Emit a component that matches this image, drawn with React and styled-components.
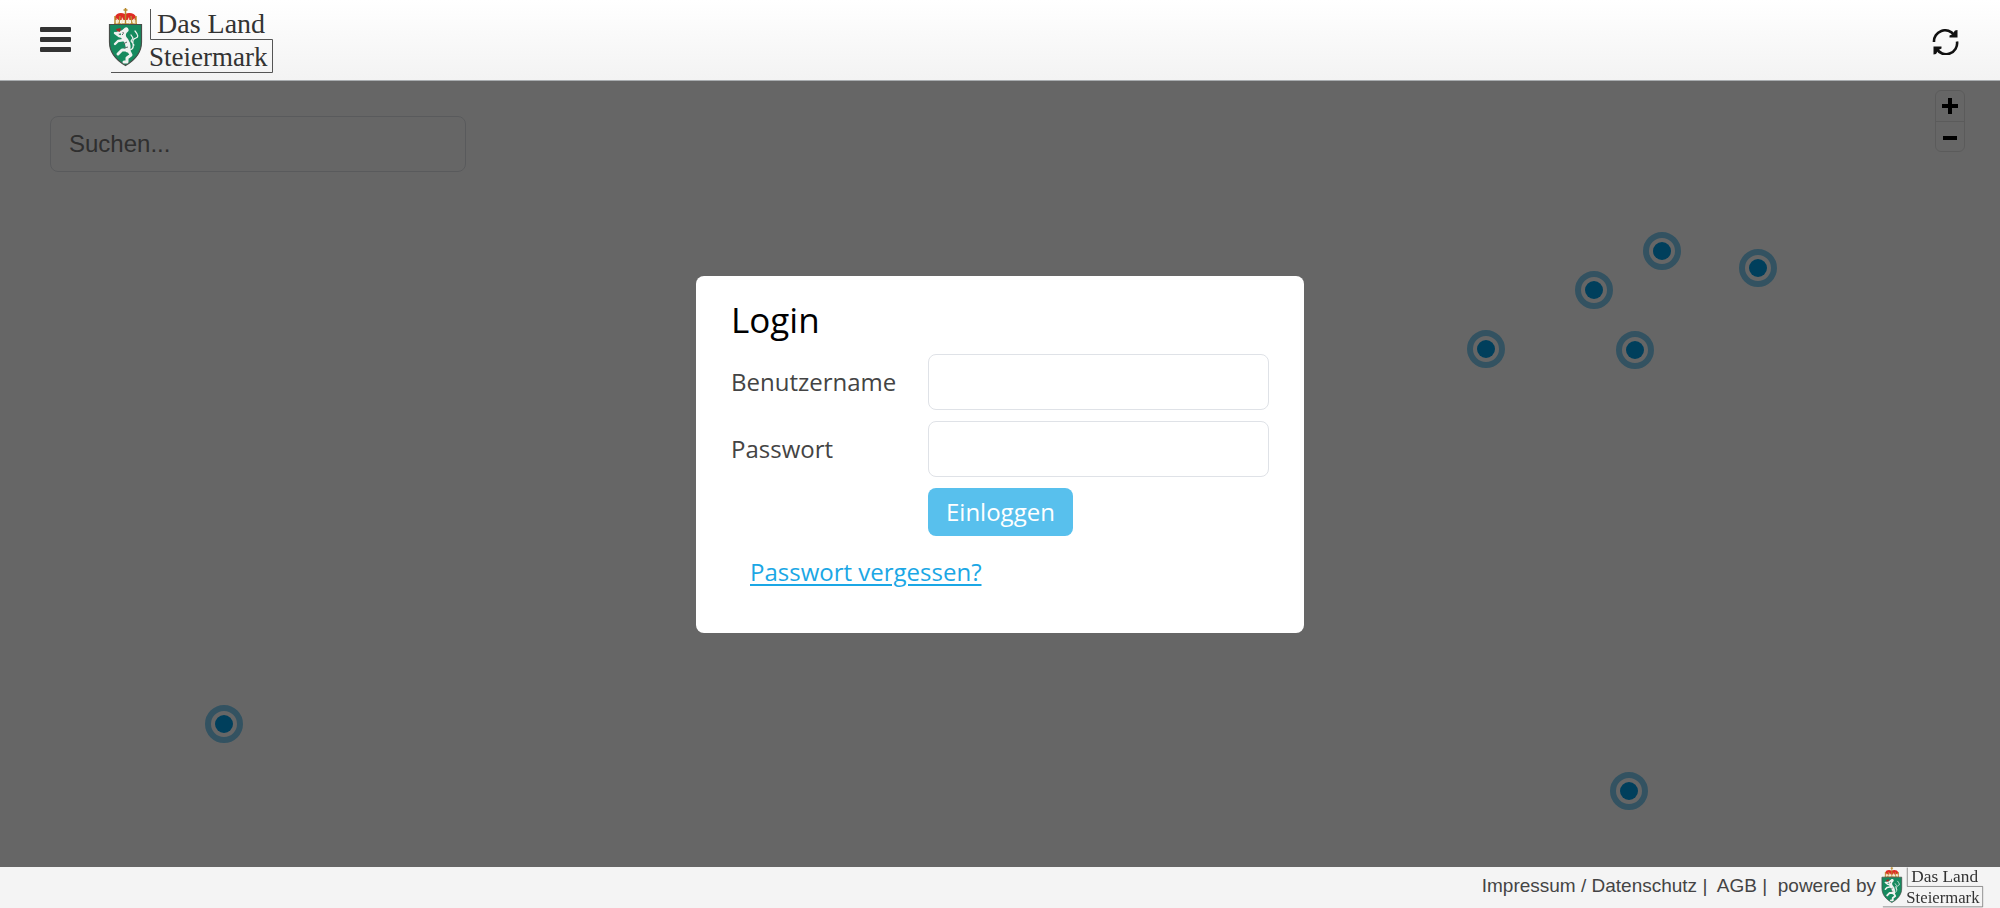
import React from 'react';
import styled, { createGlobalStyle } from 'styled-components';

const SANS = '"Liberation Sans", Arial, sans-serif';
const OPEN = '"Open Sans", sans-serif';

const GlobalStyle = createGlobalStyle`
  *, *::before, *::after { box-sizing: border-box; }
  body { margin: 0; font-family: ${OPEN}; background: #fff; }
`;

const Page = styled.div`
  min-height: 100vh;
  display: flex;
  flex-direction: column;
`;

const Header = styled.header`
  position: relative;
  z-index: 2;
  height: 81px;
  padding: 0 40px;
  display: flex;
  align-items: center;
  gap: 37px;
  background: linear-gradient(#fff, #f3f3f3);
  border-bottom: 1px solid #a9adb0;
`;

const IconButton = styled.button`
  display: flex;
  padding: 0;
  border: 0;
  background: none;
  cursor: pointer;
`;

const MenuButton = styled(IconButton)`
  margin-bottom: 2px;
`;

const RefreshButton = styled(IconButton)`
  margin: 4px 0 0 auto;
`;

const LogoSvg = styled.svg`
  display: block;
  flex: none;
  width: ${(p) => p.$width}px;
  height: auto;
  overflow: visible;
`;

const Map = styled.main`
  position: relative;
  flex: 1;
  background: #fff;
`;

const MapControls = styled.div`
  display: flex;
  justify-content: space-between;
  align-items: flex-start;
  padding: 9px 35px 0 50px;
`;

const TextInput = styled.input`
  height: 56px;
  width: 100%;
  padding: 0 18px;
  border: 1px solid #dfe2e7;
  border-radius: 8px;
  background: #fff;
  color: #444;
  font: 24px ${OPEN};
`;

const SearchInput = styled(TextInput)`
  width: 416px;
  margin-top: 26px;
  font-family: ${SANS};
  &::placeholder { color: #757575; opacity: 1; }
`;

const ZoomBar = styled.div`
  width: 30px;
  border: 1px solid #e4e4e4;
  border-radius: 6px;
`;

const ZoomButton = styled(IconButton)`
  width: 100%;
  height: 30px;
  align-items: center;
  justify-content: center;
  & + & { border-top: 1px solid #e4e4e4; }
`;

const Marker = styled.span`
  position: absolute;
  width: 38px;
  height: 38px;
  margin: -19px 0 0 -19px;
  border: 6px solid rgba(0, 158, 230, 0.5);
  border-radius: 50%;
  display: grid;
  place-items: center;
  &::after {
    content: '';
    width: 18px;
    height: 18px;
    border-radius: 50%;
    background: #009ee6;
  }
`;

const Overlay = styled.div`
  position: fixed;
  inset: 0;
  z-index: 1;
  display: grid;
  place-items: center;
  background: rgba(0, 0, 0, 0.6);
`;

const Dialog = styled.section`
  width: 608px;
  max-width: 100%;
  padding: 20px 35px 44px;
  border-radius: 8px;
  background: #fff;
`;

const Title = styled.h1`
  margin: 0;
  color: #000;
  font-size: 35px;
  font-weight: 400;
  line-height: 48px;
`;

const Form = styled.form`
  display: grid;
  grid-template-columns: 197px 1fr;
  align-items: center;
  row-gap: 11px;
  margin-top: 10px;
`;

const Label = styled.label`
  color: #444;
  font-size: 24px;
`;

const SubmitButton = styled.button`
  grid-column: 2;
  justify-self: start;
  height: 48px;
  padding: 0 18px;
  border: 0;
  border-radius: 8px;
  background: #58c0ed;
  color: #fff;
  font: 24px ${OPEN};
  cursor: pointer;
`;

const ForgotLink = styled.a`
  display: inline-block;
  margin: 19px 0 0 19px;
  color: #1ba7e5;
  font-size: 24px;
  line-height: 34px;
  text-underline-offset: 3px;
`;

const Footer = styled.footer`
  position: relative;
  z-index: 2;
  height: 41px;
  padding-right: 17px;
  display: flex;
  align-items: center;
  justify-content: flex-end;
  background: #f4f4f4;
  color: #444;
  font: 19px/37px ${SANS};
`;

const FooterText = styled.span`
  align-self: flex-start;
  margin-right: 5px;
  white-space: pre;
`;

const FooterLink = styled.a`
  color: inherit;
  text-decoration: none;
`;

const MARKERS = [
  [1486, 349], [1594, 290], [1662, 251], [1758, 268], [1635, 350], [224, 724], [1629, 791],
].map(([x, y]) => ({ left: `${x / 20}%`, top: `${((y - 81) / 786) * 100}%` }));

function Logo({ width }) {
  return (
    <LogoSvg $width={width} viewBox="0 0 165 65" role="img" aria-label="Das Land Steiermark">
      <path d="M7 9C8 5 13 4 17 6C21 4 27 5 28 9L28 12H7z" fill="#df2b24" />
      <g fill="none" stroke="#b98a2d" strokeWidth="1.5">
        <path d="M17.500 0v16M15.500 2h4M7 8v8M28 8v8M12 8l-1 8M23 8l1 8" />
        <path d="M6 16.200h23" strokeWidth="1.800" />
      </g>
      <path d="M8.500 10l3 3-3 3zM14 9l2 4-3 3zM21 9l-2 4 3 3zM26.500 10l-3 3 4 3z" fill="#f4e7c4" />
      <path d="M1.500 16.500H33.500V34C33.500 45 27 52 17.500 57.500C8 52 1.500 45 1.500 34z" fill="#168a5e" stroke="#484d49" strokeWidth="1.200" />
      <g fill="none" stroke="#f0f2f0" strokeLinecap="round" strokeLinejoin="round">
        <path d="M18 22Q14 25 16 30Q21 35 20 42" strokeWidth="5" />
        <path d="M19 21l-6 3-4 1M15 29l-4-1-4-3M16 32l-6 1-3 3" strokeWidth="2.400" />
        <path d="M20 42l-6 0-4 4M21 43l2 4-4 3 0 4-3 0" strokeWidth="3" />
        <path d="M22 42q4-1 3-6t3-6-1-7M26 37l-3-4 2-3-2-3" strokeWidth="1.200" />
      </g>
      <path d="M8 21l5-1-1 4-3-1z" fill="#a72825" />
      <path d="M15 24q1 2-1 3M19 34l-4 2M20 39l-4 1" fill="none" stroke="#5c6862" strokeWidth="1" />
      <path d="M42.500 1V31.500H164.500V64.500H3" fill="none" stroke="#555" strokeWidth="1" />
      <g fill="#333" fontFamily="'Liberation Serif', serif">
        <text x="49" y="25" fontSize="28">Das Land</text>
        <text x="41" y="58" fontSize="27">Steiermark</text>
      </g>
    </LogoSvg>
  );
}

export default function App() {
  return (
    <>
      <GlobalStyle />
      <Page>
        <Header>
          <MenuButton aria-label="Menü">
            <svg width="31" height="25" viewBox="0 0 31 25" fill="#333">
              <rect width="31" height="5" rx="1" />
              <rect y="10" width="31" height="5" rx="1" />
              <rect y="20" width="31" height="5" rx="1" />
            </svg>
          </MenuButton>
          <Logo width={165} />
          <RefreshButton aria-label="Aktualisieren">
            <svg width="28" height="26" viewBox="0 0 28 26">
              <path d="M2 13A11 11 0 0 1 22 6M25 12.500A11 11 0 0 1 4.500 19.500" fill="none" stroke="#111" strokeWidth="2.600" />
              <path d="M25.500 1V8.500H17.500V6.500L20 5.500 23 1.500zM1.500 25.500V17.500H9.500V19.500L6.500 21 4 25z" fill="#111" />
            </svg>
          </RefreshButton>
        </Header>
        <Map>
          <MapControls>
            <SearchInput type="search" placeholder="Suchen..." aria-label="Suchen" />
            <ZoomBar>
              <ZoomButton aria-label="Vergrößern">
                <svg width="16" height="16"><path d="M8 0V16M0 8H16" stroke="#000" strokeWidth="4" /></svg>
              </ZoomButton>
              <ZoomButton aria-label="Verkleinern">
                <svg width="16" height="16"><path d="M1 9H15" stroke="#000" strokeWidth="4" /></svg>
              </ZoomButton>
            </ZoomBar>
          </MapControls>
          {MARKERS.map((pos) => <Marker key={pos.left} style={pos} />)}
        </Map>
        <Footer>
          <FooterText>
            <FooterLink href="#impressum">Impressum / Datenschutz</FooterLink>{' |  '}
            <FooterLink href="#agb">AGB</FooterLink>{' |  powered by'}
          </FooterText>
          <Logo width={102} />
        </Footer>
      </Page>
      <Overlay>
        <Dialog role="dialog" aria-labelledby="login-title">
          <Title id="login-title">Login</Title>
          <Form>
            <Label htmlFor="user">Benutzername</Label>
            <TextInput id="user" type="text" />
            <Label htmlFor="password">Passwort</Label>
            <TextInput id="password" type="password" />
            <SubmitButton type="submit">Einloggen</SubmitButton>
          </Form>
          <ForgotLink href="#passwort">Passwort vergessen?</ForgotLink>
        </Dialog>
      </Overlay>
    </>
  );
}
